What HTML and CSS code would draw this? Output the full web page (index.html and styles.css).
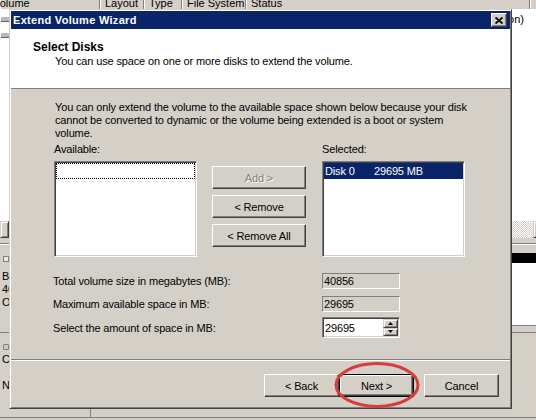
FILE: index.html
```html
<!DOCTYPE html>
<html>
<head>
<meta charset="utf-8">
<title>Extend Volume Wizard</title>
<link rel="stylesheet" href="styles.css">
</head>
<body>
<div class="screen">
  <div class="colhead">
    <div class="col c-vol"><span>Volume</span></div>
    <div class="col c-layout"><span>Layout</span></div>
    <div class="col c-type"><span>Type</span></div>
    <div class="col c-fs"><span>File System</span></div>
    <div class="col c-status"><span>Status</span></div>
    <div class="col c-rest"><span></span></div>
  </div>
  <div class="listpane">
    <div class="rows">
      <div class="row"><span class="vicon"></span><span class="rtext">Healthy (System Partition)</span></div>
      <div class="row"><span class="vicon"></span></div>
    </div>
    <div class="hscroll"><span class="sbtn left"></span><span class="track"></span><span class="sbtn"></span></div>
  </div>
  <div class="splitter"></div>
  <div class="diskpane">
    <div class="diskrow d0">
      <div class="dlabel">
        <div class="dline"><span class="dicon"></span><span class="dname">Disk 0</span></div>
        <div class="dtext">
          <div>Basic</div>
          <div>40.00 GB</div>
          <div>Online</div>
        </div>
      </div>
      <div class="dpart"><div class="dstrip"></div><div class="dbody"></div></div>
    </div>
    <div class="diskrow d1">
      <div class="dlabel">
        <div class="dline"><span class="dicon cd"></span><span class="dname">CD-ROM 0</span></div>
        <div class="dtext2">
          <div>CD-ROM</div>
          <div>&nbsp;</div>
          <div>No Media</div>
        </div>
      </div>
    </div>
  </div>
  <div class="statusbar">
    <div class="sbtop"><div class="sbcell"></div></div>
    <div class="sbline"></div>
  </div>
</div>

<div class="dialog">
  <div class="titlebar">
    <div class="title">Extend Volume Wizard</div>
    <div class="closebtn">
      <svg width="8" height="7" viewBox="0 0 8 7"><path d="M0.5 0.5 L7.5 6.5 M7.5 0.5 L0.5 6.5" stroke="#000" stroke-width="1.8" fill="none"/></svg>
    </div>
  </div>
  <div class="wizhead">
    <div class="wh-title">Select Disks</div>
    <div class="wh-sub">You can use space on one or more disks to extend the volume.</div>
  </div>
  <div class="wizbody">
    <div class="para">You can only extend the volume to the available space shown below because your disk<br>cannot be converted to dynamic or the volume being extended is a boot or system<br>volume.</div>
    <div class="picker">
      <div class="pcol">
        <div class="plabel">Available:</div>
        <div class="listbox"><div class="focusrow"></div></div>
      </div>
      <div class="bcol">
        <div class="btn disabled">Add &gt;</div>
        <div class="btn">&lt; Remove</div>
        <div class="btn">&lt; Remove All</div>
      </div>
      <div class="pcol sel">
        <div class="plabel">Selected:</div>
        <div class="listbox"><div class="selrow"><span class="c1">Disk 0</span><span>29695 MB</span></div></div>
      </div>
    </div>
    <div class="fields">
      <div class="frow r1"><div class="flabel">Total volume size in megabytes (MB):</div><div class="ro">40856</div></div>
      <div class="frow r2"><div class="flabel">Maximum available space in MB:</div><div class="ro">29695</div></div>
      <div class="frow r3"><div class="flabel">Select the amount of space in MB:</div>
        <div class="spin">
          <div class="spin-val">29695</div>
          <div class="spin-btns">
            <div class="sb"><svg width="5" height="3" viewBox="0 0 5 3"><path d="M2.5 0 L5 3 L0 3 Z" fill="#000"/></svg></div>
            <div class="sb"><svg width="5" height="3" viewBox="0 0 5 3"><path d="M0 0 L5 0 L2.5 3 Z" fill="#000"/></svg></div>
          </div>
        </div>
      </div>
    </div>
  </div>
  <div class="wizfoot">
    <div class="btn">&lt; Back</div>
    <div class="btn default">Next &gt;</div>
    <div class="btn cancel">Cancel</div>
  </div>
</div>

<svg class="annot" width="92" height="52" viewBox="0 0 92 52"><ellipse cx="44" cy="25" rx="41" ry="21.5" fill="none" stroke="#d93c3c" stroke-width="3"/></svg>
</body>
</html>
```
FILE: styles.css
```css
* { box-sizing: border-box; }
html, body { margin: 0; padding: 0; }
body {
  width: 536px; height: 420px; overflow: hidden; position: relative;
  background: #d4d0c8; color: #000;
  font-family: "Liberation Sans", Arial, sans-serif; font-size: 11px;
}
.screen { width: 549px; height: 420px; display: flex; flex-direction: column; }

/* column header */
.colhead { height: 9px; flex: none; display: flex; overflow: hidden; background: #d4d0c8; }
.col {
  height: 9px; display: flex; align-items: flex-end; overflow: hidden; white-space: nowrap;
  padding-left: 5px; border-right: 1px solid #808080; box-shadow: inset 1px 0 #fff;
}
.col span { display: block; flex: none; height: 12px; line-height: 12px; }
.c-vol { width: 100px; padding-left: 0; }
.c-vol span { margin-left: -7px; }
.c-layout { width: 44px; }
.c-type { width: 38px; }
.c-fs { width: 64px; }
.c-status { width: 284px; }
.c-rest { flex: 1; border-right: 0; }

/* volume list */
.listpane { height: 229px; flex: none; background: #fff; display: flex; flex-direction: column; }
.rows { flex: 1; padding-top: 2px; }
.row { height: 16px; display: flex; align-items: center; white-space: nowrap; }
.vicon { width: 14px; height: 5px; margin-left: 1px; background: #b8b8b8; border-bottom: 1px solid #606060; }
.rtext { margin-left: auto; margin-right: 25px; }
.hscroll { height: 17px; flex: none; display: flex; }
.sbtn {
  width: 16px; flex: none; background: #d4d0c8;
  border: 1px solid; border-color: #d4d0c8 #404040 #404040 #d4d0c8;
  box-shadow: inset 1px 1px #fff, inset -1px -1px #808080;
}
.sbtn.left { width: 9px; }
.track { flex: 1; background: repeating-conic-gradient(#d4d0c8 0 25%, #fff 0 50%) 0 0 / 2px 2px; }

.splitter { height: 12px; flex: none; padding-top: 5px; }
.splitter::before { content: ""; display: block; height: 1px; background: #808080; }
.splitter::after { content: ""; display: block; height: 1px; background: #fff; }

/* disk view */
.diskpane { flex: 1; display: flex; flex-direction: column; }
.diskrow { display: flex; }
.diskrow.d0 { height: 83px; border-bottom: 1px solid #808080; }
.dlabel { width: 110px; flex: none; padding: 2px 0 0 2px; line-height: 13px; white-space: nowrap; }
.dline { height: 13px; display: flex; align-items: center; }
.dicon { width: 6px; height: 6px; margin-left: 1px; border: 1px solid #808080; background: #e8e8e8; }
.dicon.cd { border-radius: 1px; background: #c8c8c8; }
.dname { margin-left: 12px; }
.dtext { margin-top: 5px; }
.d1 .dlabel { padding-top: 7px; }
.dpart { flex: 1; margin-top: 3px; }
.dstrip { height: 10px; background: #000; }
.dbody { height: 63px; background: #fff; border-bottom: 1px solid #808080; }

.statusbar { height: 11px; flex: none; display: flex; flex-direction: column; }
.sbtop { height: 8px; display: flex; }
.sbcell { width: 91px; border-right: 1px solid #808080; }
.sbline { height: 1px; background: #808080; }

/* dialog window */
.dialog {
  position: absolute; left: 9px; top: 9px; width: 503px; height: 400px;
  background: #d4d0c8; padding: 1px;
  border: 1px solid; border-color: #d4d0c8 #404040 #404040 #d4d0c8;
  box-shadow: inset 1px 1px #fff, inset -1px -1px #808080;
  display: flex; flex-direction: column;
}
.titlebar { height: 18px; flex: none; background: #0a246a; display: flex; align-items: center; padding-left: 2px; }
.title { flex: 1; color: #fff; font-weight: bold; font-size: 11px; letter-spacing: 0.3px; white-space: nowrap; }
.closebtn {
  width: 16px; height: 14px; margin-right: 3px; background: #d4d0c8;
  border: 1px solid; border-color: #fff #404040 #404040 #fff; box-shadow: inset -1px -1px #808080;
  display: flex; align-items: center; justify-content: center;
}
.closebtn svg { display: block; }

.wizhead { height: 60px; flex: none; background: #fff; border-bottom: 1px solid #808080; padding: 11px 0 0 22px; }
.wh-title { font-weight: bold; font-size: 12px; line-height: 14px; }
.wh-sub { line-height: 13px; margin-top: 1px; padding-left: 22px; letter-spacing: -0.15px; white-space: nowrap; }

.wizbody { flex: 1; padding: 12px 0 0 42px; }
.para { padding-left: 2px; line-height: 13px; white-space: nowrap; letter-spacing: -0.14px; }
.picker { display: flex; margin-top: 3px; padding-left: 1px; }
.pcol { width: 143px; flex: none; }
.pcol.sel { margin-left: 16px; }
.plabel { height: 13px; line-height: 13px; margin-bottom: 5px; letter-spacing: -0.15px; }
.listbox {
  height: 96px; background: #fff; padding: 1px;
  border: 1px solid; border-color: #808080 #fff #fff #808080;
  box-shadow: inset 1px 1px #404040, inset -1px -1px #d4d0c8;
}
.focusrow { height: 16px; border: 1px dotted #000; }
.selrow { height: 16px; background: #0a246a; color: #fff; display: flex; align-items: center; padding-left: 1px; letter-spacing: -0.15px; white-space: nowrap; }
.selrow .c1 { width: 49px; }
.bcol { width: 94px; flex: none; margin-left: 15px; padding-top: 23px; display: flex; flex-direction: column; gap: 6px; }

.btn {
  width: 75px; height: 23px; flex: none; background: #d4d0c8;
  border: 1px solid; border-color: #fff #404040 #404040 #fff; box-shadow: inset -1px -1px #808080;
  display: flex; align-items: center; justify-content: center; white-space: nowrap; letter-spacing: -0.15px;
}
.bcol .btn { width: 94px; }
.btn.disabled { color: #808080; text-shadow: 1px 1px #fff; }
.btn.default { border-color: #000; box-shadow: inset 1px 1px #fff, inset -1px -1px #404040, inset -2px -2px #808080; }
.btn.cancel { margin-left: 10px; }

.fields { margin-top: 16px; }
.frow { display: flex; align-items: center; }
.frow.r1 { height: 16px; margin-bottom: 7px; }
.frow.r2 { height: 16px; margin-bottom: 5px; }
.frow.r3 { height: 21px; }
.flabel { width: 269px; flex: none; white-space: nowrap; letter-spacing: -0.15px; }
.ro {
  width: 78px; height: 16px; padding-left: 1px; line-height: 14px; letter-spacing: -0.15px;
  border: 1px solid; border-color: #808080 #fff #fff #808080;
}
.spin {
  width: 78px; height: 21px; background: #fff; padding: 1px; display: flex;
  border: 1px solid; border-color: #808080 #fff #fff #808080;
  box-shadow: inset 1px 1px #404040, inset -1px -1px #d4d0c8;
}
.spin-val { flex: 1; padding-left: 1px; display: flex; align-items: center; letter-spacing: -0.15px; }
.spin-btns { width: 15px; display: flex; flex-direction: column; }
.sb {
  flex: 1; background: #d4d0c8; display: flex; align-items: center; justify-content: center;
  border: 1px solid; border-color: #d4d0c8 #404040 #404040 #d4d0c8;
  box-shadow: inset 1px 1px #fff, inset -1px -1px #808080;
}
.sb svg { display: block; }

.wizfoot {
  height: 48px; flex: none; border-top: 1px solid #808080; box-shadow: inset 0 1px #fff;
  display: flex; justify-content: flex-end; padding: 14px 11px 0 0;
}

.annot { position: absolute; left: 333px; top: 360px; }
```
